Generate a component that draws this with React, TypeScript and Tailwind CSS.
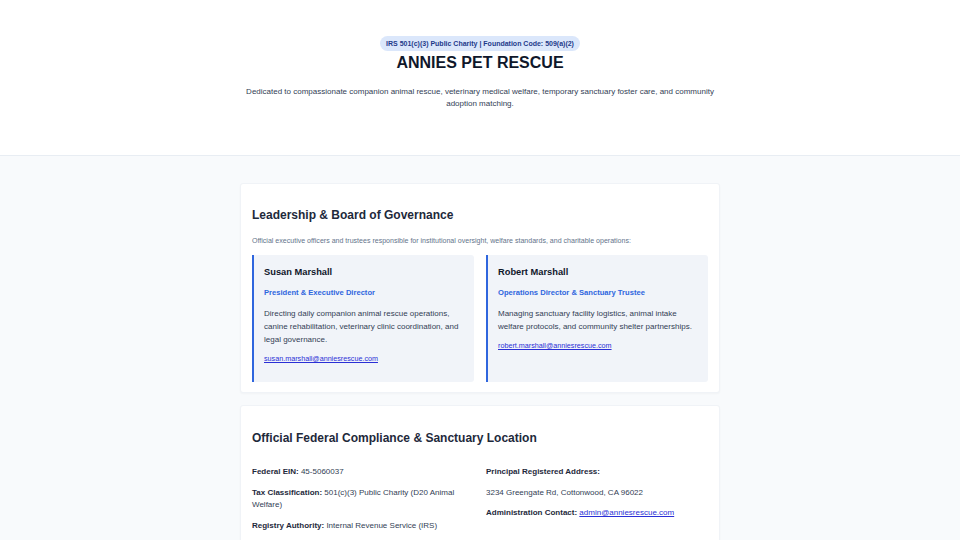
const LEADERS = [
  {
    name: "Susan Marshall",
    role: "President & Executive Director",
    bio: "Directing daily companion animal rescue operations, canine rehabilitation, veterinary clinic coordination, and legal governance.",
    email: "susan.marshall@anniesrescue.com",
  },
  {
    name: "Robert Marshall",
    role: "Operations Director & Sanctuary Trustee",
    bio: "Managing sanctuary facility logistics, animal intake welfare protocols, and community shelter partnerships.",
    email: "robert.marshall@anniesrescue.com",
  },
];

function Header() {
  return (
    <header className="bg-white border-b border-[#e8edf3] pt-[36px] pb-[45px] px-4 flex flex-col items-center text-center">
      <span className="inline-block rounded-full bg-[#dbe7fb] text-[#1e3a8a] text-[7px] leading-[9px] font-bold px-[6px] py-[3px]">
        IRS 501(c)(3) Public Charity | Foundation Code: 509(a)(2)
      </span>
      <h1 className="mt-[3px] text-[16px] leading-[18px] font-bold text-[#0f172a]">
        ANNIES PET RESCUE
      </h1>
      <p className="mt-[14px] max-w-[480px] text-[8px] leading-[12px] text-[#334155]">
        Dedicated to compassionate companion animal rescue, veterinary medical welfare, temporary sanctuary foster care, and community adoption matching.
      </p>
    </header>
  );
}

function LeaderCard({ name, role, bio, email }: (typeof LEADERS)[number]) {
  return (
    <div className="bg-[#f1f4f9] border-l-2 border-[#2f66de] rounded-r-[3px] px-[10px] pt-[11px] pb-[18px]">
      <h3 className="text-[9.3px] leading-[12px] font-bold text-[#0f172a]">{name}</h3>
      <p className="mt-[10px] text-[7.6px] leading-[10px] font-bold text-[#2f66de]">{role}</p>
      <p className="mt-[9.5px] text-[8px] leading-[13px] text-[#334155]">{bio}</p>
      <a href="#" className="block mt-[7.5px] text-[7.2px] leading-[10px] text-[#2a2fd6] underline">
        {email}
      </a>
    </div>
  );
}

function Field({ label, value }: { label: string; value?: React.ReactNode }) {
  return (
    <p className="mb-[8.5px] text-[8px] leading-[12.5px] text-[#334155]">
      <strong className="font-bold text-[#1e293b]">{label}</strong>
      {value !== undefined && <> {value}</>}
    </p>
  );
}

export default function App() {
  return (
    <div className="min-h-screen bg-[#f8fafc] font-['Liberation_Sans',Arial,sans-serif]">
      <Header />

      <main className="max-w-[480px] mx-auto pt-[27px] pb-8 flex flex-col gap-[12px]">
        {/* Leadership */}
        <section className="bg-white rounded-[3px] border border-[#f0f3f7] shadow-[0_1px_2px_rgba(15,23,42,0.03)] px-[11px] pt-[24px] pb-[10px]">
          <h2 className="text-[12px] leading-[14px] font-bold text-[#1e293b]">
            Leadership &amp; Board of Governance
          </h2>
          <p className="mt-[13px] text-[7.05px] leading-[11px] text-[#64748b]">
            Official executive officers and trustees responsible for institutional oversight, welfare standards, and charitable operations:
          </p>
          <div className="mt-[8.5px] grid grid-cols-2 gap-[12px]">
            {LEADERS.map((l) => (
              <LeaderCard key={l.email} {...l} />
            ))}
          </div>
        </section>

        {/* Compliance */}
        <section className="bg-white rounded-[3px] border border-[#f0f3f7] shadow-[0_1px_2px_rgba(15,23,42,0.03)] px-[11px] pt-[25px] pb-[16px]">
          <h2 className="text-[12px] leading-[14px] font-bold text-[#1e293b]">
            Official Federal Compliance &amp; Sanctuary Location
          </h2>
          <div className="mt-[21px] grid grid-cols-2 gap-[12px]">
            <div>
              <Field label="Federal EIN:" value="45-5060037" />
              <Field label="Tax Classification:" value="501(c)(3) Public Charity (D20 Animal Welfare)" />
              <Field label="Registry Authority:" value="Internal Revenue Service (IRS)" />
            </div>
            <div>
              <Field label="Principal Registered Address:" />
              <p className="mb-[8px] text-[8px] leading-[12.5px] text-[#334155]">
                3234 Greengate Rd, Cottonwood, CA 96022
              </p>
              <Field
                label="Administration Contact:"
                value={
                  <a href="#" className="text-[#2a2fd6] underline">
                    admin@anniesrescue.com
                  </a>
                }
              />
            </div>
          </div>
        </section>
      </main>
    </div>
  );
}
